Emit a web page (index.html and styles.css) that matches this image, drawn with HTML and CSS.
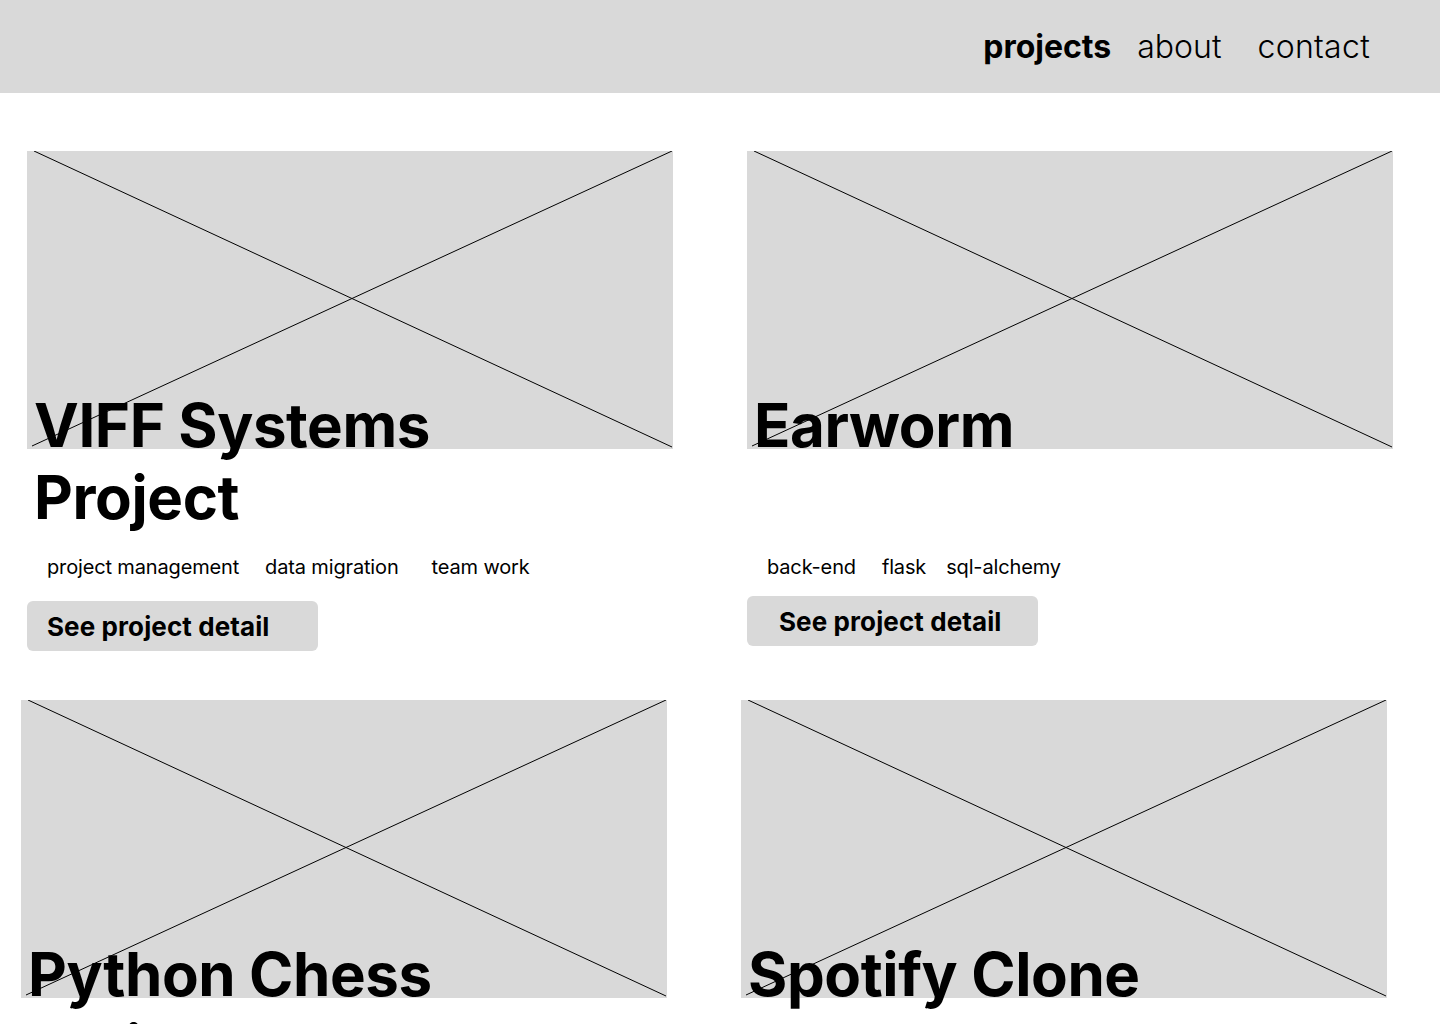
FILE: index.html
```html
<!DOCTYPE html>
<html lang="en">
<head>
<meta charset="utf-8">
<title>Projects</title>
<link rel="stylesheet" href="styles.css">
</head>
<body>
<header class="site-header">
  <nav class="nav">
    <a class="nav-link nav-link--active" href="#">projects</a>
    <a class="nav-link nav-link--about" href="#">about</a>
    <a class="nav-link nav-link--contact" href="#">contact</a>
  </nav>
</header>
<main class="projects">
  <div class="row row--first">
    <article class="card card--viff">
      <div class="card-image">
        <svg class="placeholder-x" viewBox="0 0 646 298" preserveAspectRatio="none"><line x1="7" y1="0" x2="645" y2="296"/><line x1="5" y1="295" x2="645" y2="0"/></svg>
      </div>
      <h2 class="card-title">VIFF Systems Project</h2>
      <ul class="tags">
        <li class="tag">project management</li>
        <li class="tag">data migration</li>
        <li class="tag">team work</li>
      </ul>
      <a class="card-button" href="#">See project detail</a>
    </article>
    <article class="card card--earworm">
      <div class="card-image">
        <svg class="placeholder-x" viewBox="0 0 646 298" preserveAspectRatio="none"><line x1="7" y1="0" x2="645" y2="296"/><line x1="5" y1="295" x2="645" y2="0"/></svg>
      </div>
      <h2 class="card-title">Earworm</h2>
      <ul class="tags">
        <li class="tag">back-end</li>
        <li class="tag">flask</li>
        <li class="tag">sql-alchemy</li>
      </ul>
      <a class="card-button" href="#">See project detail</a>
    </article>
  </div>
  <div class="row row--second">
    <article class="card card--chess">
      <div class="card-image">
        <svg class="placeholder-x" viewBox="0 0 646 298" preserveAspectRatio="none"><line x1="7" y1="0" x2="645" y2="296"/><line x1="5" y1="295" x2="645" y2="0"/></svg>
      </div>
      <h2 class="card-title">Python Chess Project</h2>
    </article>
    <article class="card card--spotify">
      <div class="card-image">
        <svg class="placeholder-x" viewBox="0 0 646 298" preserveAspectRatio="none"><line x1="7" y1="0" x2="645" y2="296"/><line x1="5" y1="295" x2="645" y2="0"/></svg>
      </div>
      <h2 class="card-title">Spotify Clone</h2>
    </article>
  </div>
</main>
</body>
</html>
```
FILE: styles.css
```css
* { box-sizing: border-box; }

html, body {
  margin: 0;
  padding: 0;
  background: #ffffff;
  color: #000000;
  font-family: Inter, "Noto Sans", "Liberation Sans", sans-serif;
}

.site-header {
  height: 93px;
  background: #d9d9d9;
  display: flex;
  justify-content: flex-end;
  align-items: center;
  padding-right: 70px;
}

.nav {
  display: flex;
  align-items: center;
}

.nav-link {
  font-size: 32px;
  line-height: 39px;
  font-weight: 300;
  color: #000;
  text-decoration: none;
}

.nav-link--active { font-weight: 700; }
.nav-link--about { margin-left: 26px; }
.nav-link--contact { margin-left: 36px; letter-spacing: 0.3px; }

.projects {
  padding-top: 58px;
  overflow: hidden;
}

.row {
  display: grid;
  grid-template-columns: 646px 646px;
  column-gap: 74px;
  align-items: start;
}

.row--first { padding-left: 27px; }
.row--second { padding-left: 21px; margin-top: 49px; }

.card {
  display: flex;
  flex-direction: column;
  align-items: flex-start;
}

.card-image {
  position: relative;
  width: 646px;
  height: 298px;
  background: #d9d9d9;
}

.placeholder-x {
  position: absolute;
  inset: 0;
  width: 100%;
  height: 100%;
}

.placeholder-x line {
  stroke: #000;
  stroke-width: 1;
}

.card-title {
  position: relative;
  margin: -60px 0 0;
  padding-left: 7px;
  max-width: 540px;
  min-height: 144px;
  font-size: 60px;
  line-height: 72px;
  font-weight: 700;
  letter-spacing: -0.4px;
}

.tags {
  display: flex;
  list-style: none;
  margin: 22px 0 0;
  padding: 0 0 0 20px;
}

.tag {
  font-size: 20px;
  line-height: 24px;
  font-weight: 400;
  letter-spacing: -0.15px;
}

.card--viff .tag:nth-child(2) { margin-left: 26px; }
.card--viff .tag:nth-child(3) { margin-left: 33px; }
.card--earworm .tag:nth-child(2) { margin-left: 26px; }
.card--earworm .tag:nth-child(3) { margin-left: 20px; }

.card-button {
  display: flex;
  align-items: center;
  width: 291px;
  height: 50px;
  margin-top: 22px;
  padding-left: 20px;
  background: #d9d9d9;
  border-radius: 6px;
  color: #000;
  text-decoration: none;
  font-size: 26px;
  font-weight: 700;
  letter-spacing: 0.1px;
}

.card--earworm .card-button {
  margin-top: 17px;
  padding-left: 32px;
}
```
